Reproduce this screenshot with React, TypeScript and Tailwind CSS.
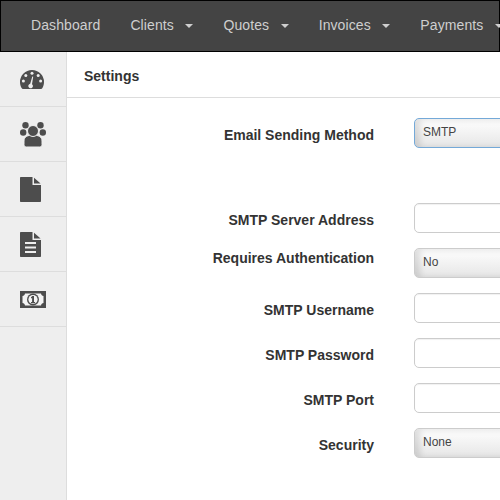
const navItems = [
  { label: 'Dashboard', caret: false },
  { label: 'Clients', caret: true },
  { label: 'Quotes', caret: true },
  { label: 'Invoices', caret: true },
  { label: 'Payments', caret: true },
];

function GaugeIcon() {
  return (
    <svg width="24" height="19" viewBox="0 0 24 19">
      <path
        fill="#4d4d4d"
        d="M12 0a12 12 0 0 1 12 12c0 2.4-.6 4.4-1.6 6.1-.3.6-.8.9-1.4.9H3c-.6 0-1.100-.3-1.400-.9C.6 16.400 0 14.400 0 12A12 12 0 0 1 12 0z"
      />
      <g fill="#eeeeee">
        <circle cx="12" cy="3.200" r="1.500" />
        <circle cx="5.800" cy="5.400" r="1.500" />
        <circle cx="18.200" cy="5.400" r="1.500" />
        <circle cx="3.400" cy="11" r="1.500" />
        <circle cx="20.600" cy="11" r="1.500" />
        <path d="M12.300 6.500l.9.200-1.200 7.500a2.300 2.300 0 1 1-1.800-.4z" />
      </g>
    </svg>
  );
}

function UsersIcon() {
  return (
    <svg width="26" height="25" viewBox="0 0 26 25">
      <g fill="#4d4d4d">
        <circle cx="5.500" cy="3.200" r="3.200" />
        <circle cx="20.500" cy="3.200" r="3.200" />
        <circle cx="3.200" cy="10.500" r="3.200" />
        <circle cx="22.800" cy="10.500" r="3.200" />
        <path
          d="M13 13c5.500 0 9 2 9 6v3.500c0 1.500-1 2.500-2.500 2.500h-13C5 25 4 24 4 22.500V19c0-4 3.500-6 9-6z"
          stroke="#eeeeee"
          strokeWidth="1"
        />
        <circle cx="13" cy="9" r="5.500" stroke="#eeeeee" strokeWidth="1" />
      </g>
    </svg>
  );
}

function FileIcon({ lines }: { lines?: boolean }) {
  return (
    <svg width="21" height="25" viewBox="0 0 21 25">
      <path fill="#4d4d4d" d="M1 0h11.500v8H21v16c0 .6-.4 1-1 1H1c-.6 0-1-.4-1-1V1c0-.6.4-1 1-1z" />
      <path fill="#4d4d4d" d="M14 .8l6.600 5.700H14z" />
      {lines && (
        <g fill="#eeeeee">
          <rect x="5" y="10" width="11" height="2" />
          <rect x="5" y="14.500" width="11" height="2" />
          <rect x="5" y="19" width="11" height="2" />
        </g>
      )}
    </svg>
  );
}

function MoneyIcon() {
  return (
    <svg width="26" height="17" viewBox="0 0 26 17">
      <rect width="26" height="17" fill="#4d4d4d" />
      <path
        fill="#f4f4f4"
        d="M5 2.500h16c.2 1.300 1.200 2.300 2.500 2.500v7c-1.300.2-2.300 1.200-2.500 2.500H5c-.2-1.300-1.200-2.300-2.500-2.500V5C3.800 4.800 4.800 3.800 5 2.500z"
      />
      <circle cx="13" cy="8.500" r="6" fill="#4d4d4d" />
      <circle cx="13" cy="8.500" r="4.600" fill="#f4f4f4" />
      <path fill="#4d4d4d" d="M12.300 5h1.700v6h1.100v1.200h-4.100V11h1.100V7l-1.100.6V6.300z" />
    </svg>
  );
}

const sideIcons = [
  <GaugeIcon key="dashboard" />,
  <UsersIcon key="clients" />,
  <FileIcon key="quotes" />,
  <FileIcon key="invoices" lines />,
  <MoneyIcon key="payments" />,
];

function Label({ children, raised }: { children: string; raised?: boolean }) {
  return (
    <label
      className={`w-[307px] shrink-0 text-right text-[14px] font-bold leading-[30px] text-[#333] ${
        raised ? 'translate-y-[-5px]' : 'translate-y-[2px]'
      }`}
    >
      {children}
    </label>
  );
}

function TextRow({ label }: { label: string }) {
  return (
    <div className="flex h-[30px] gap-[40px]">
      <Label>{label}</Label>
      <div className="h-[30px] w-[200px] shrink-0 rounded-[5px] border border-[#cccccc] bg-white shadow-[inset_0_1px_1px_rgba(0,0,0,0.06)]" />
    </div>
  );
}

function SelectRow({
  label,
  value,
  raised,
  focused,
}: {
  label: string;
  value: string;
  raised?: boolean;
  focused?: boolean;
}) {
  return (
    <div className="flex h-[30px] gap-[40px]">
      <Label raised={raised}>{label}</Label>
      <div
        className={`h-[30px] w-[200px] shrink-0 rounded-[5px] border bg-gradient-to-b from-white to-[#e6e6e6] pl-[8px] text-[12px] leading-[27px] text-[#444] shadow-[inset_5px_1px_6px_rgba(0,0,0,0.12)] ${
          focused ? 'border-[#74a9d8]' : 'border-[#cccccc]'
        }`}
      >
        {value}
      </div>
    </div>
  );
}

export default function App() {
  return (
    <div className="h-[500px] w-[500px] overflow-hidden bg-white font-['Liberation_Sans',Arial,sans-serif]">
      <nav className="flex h-[52px] items-center border border-black bg-[#444444] pb-[1px] pl-[15px]">
        {navItems.map((item) => (
          <div
            key={item.label}
            className="flex shrink-0 items-center px-[15px] text-[14px] tracking-[0.1px] text-[#cfcfcf]"
          >
            {item.label}
            {item.caret && (
              <span className="ml-[11.5px] h-0 w-0 border-x-[4px] border-t-[4px] border-x-transparent border-t-[#cfcfcf]" />
            )}
          </div>
        ))}
      </nav>
      <div className="flex h-[448px]">
        <aside className="w-[67px] shrink-0 border-r border-[#dddddd] bg-[#eeeeee]">
          {sideIcons.map((icon, i) => (
            <div key={i} className="flex h-[55px] items-center border-b border-[#dddddd] pl-[20px]">
              {icon}
            </div>
          ))}
        </aside>
        <main className="min-w-0 flex-1 overflow-hidden">
          <div className="h-[46px] border-b border-[#dddddd] pl-[17px] text-[14px] font-bold leading-[48px] text-[#333]">
            Settings
          </div>
          <div className="flex flex-col gap-[15px] pt-[20px]">
            <div className="mb-[40px]">
              <SelectRow label="Email Sending Method" value="SMTP" focused />
            </div>
            <TextRow label="SMTP Server Address" />
            <SelectRow label="Requires Authentication" value="No" raised />
            <TextRow label="SMTP Username" />
            <TextRow label="SMTP Password" />
            <TextRow label="SMTP Port" />
            <SelectRow label="Security" value="None" />
          </div>
        </main>
      </div>
    </div>
  );
}
